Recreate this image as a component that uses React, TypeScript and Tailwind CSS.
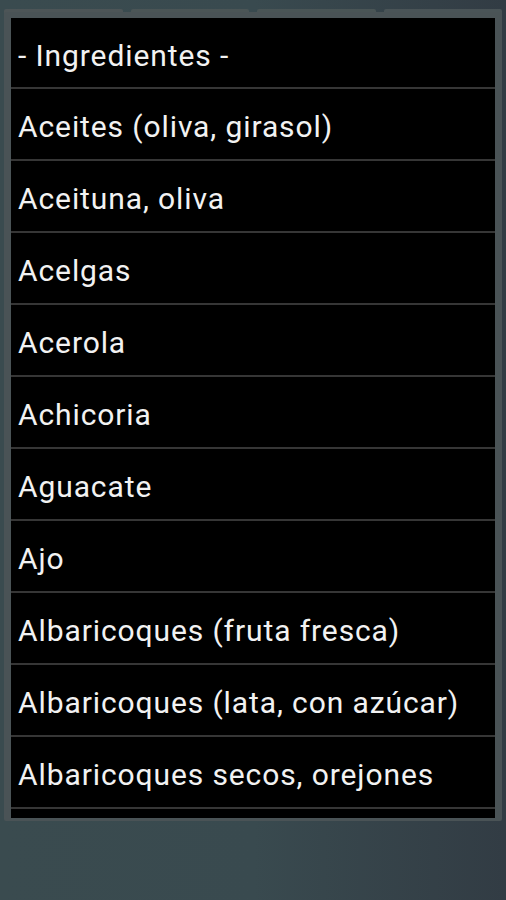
import React from 'react';

const items = [
  '- Ingredientes -',
  'Aceites (oliva, girasol)',
  'Aceituna, oliva',
  'Acelgas',
  'Acerola',
  'Achicoria',
  'Aguacate',
  'Ajo',
  'Albaricoques (fruta fresca)',
  'Albaricoques (lata, con azúcar)',
  'Albaricoques secos, orejones',
];

const App: React.FC = () => {
  return (
    <div
      className="h-[900px] w-full overflow-hidden bg-gradient-to-r from-[#3a4b4f] via-[#394a4f] to-[#323c44]"
      style={{ fontFamily: 'Roboto, "Noto Sans", sans-serif' }}
    >
      {/* tab strip behind the dialog */}
      <div className="relative px-[4px] pt-[9px]">
        <div className="grid grid-cols-4 gap-[8px] h-[12px]">
          <div className="bg-[#4d5557] rounded-t-[2px]" />
          <div className="bg-[#4b5556] rounded-t-[2px]" />
          <div className="bg-[#4a5556] rounded-t-[2px]" />
          <div className="bg-[#4a5457] rounded-t-[2px]" />
        </div>

        {/* dialog frame */}
        <div className="absolute left-[4px] right-[4px] top-[12px] h-[809px] bg-[#4a5356] rounded-[2px] px-[7px] pt-[6px]">
          <div className="bg-black h-[800px] overflow-hidden">
            {items.map((item, i) => (
              <div
                key={item}
                className={`flex items-center pl-[7px] pt-[5px] text-[30px] tracking-[0.9px] text-[#f2f2f2] border-b-2 border-[#363636] ${
                  i === 0 ? 'h-[71px]' : 'h-[72px]'
                }`}
              >
                {item}
              </div>
            ))}
          </div>
        </div>
      </div>
    </div>
  );
};

export default App;
